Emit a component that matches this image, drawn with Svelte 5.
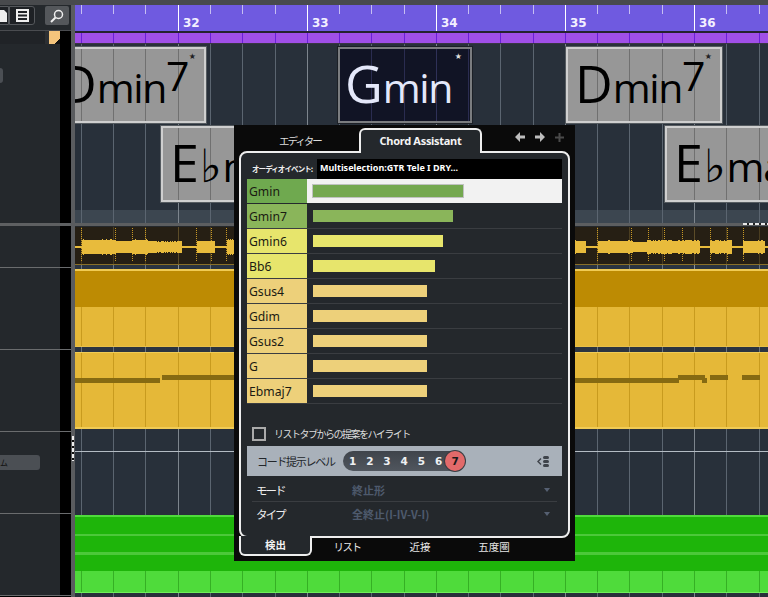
<script>
  const xs = [81,113,145,178,210,242,275,307,339,371,404,436,468,500,533,565,597,629,662,694,726,759];
  const isBar = (i) => (i % 4) === 3;
  const rulerLabels = [[178,32],[307,33],[436,34],[565,35],[694,36]];

  const events = [
    { left: 50, top: 47, w: 156, root: 'D', q: 'min', sup: '7', kind: 'gray' },
    { left: 338, top: 47, w: 134, root: 'G', q: 'min', sup: '', kind: 'dark' },
    { left: 566, top: 47, w: 156, root: 'D', q: 'min', sup: '7', kind: 'gray' },
    { left: 161, top: 126, w: 120, root: 'E', flat: true, q: 'maj', sup: '', kind: 'gray' },
    { left: 665, top: 126, w: 160, root: 'E', flat: true, q: 'maj', sup: '', kind: 'gray' }
  ];

  const chords = [
    { name: 'Gmin', w: 150, c: '#6fa94f', b: '#74a850', on: true },
    { name: 'Gmin7', w: 140, c: '#8ab55a', b: '#8ab55a' },
    { name: 'Gmin6', w: 130, c: '#e7e56c', b: '#e7e56c' },
    { name: 'Bb6', w: 122, c: '#e7e56c', b: '#e7e56c' },
    { name: 'Gsus4', w: 114, c: '#edd07a', b: '#edd07a' },
    { name: 'Gdim', w: 114, c: '#edd07a', b: '#edd07a' },
    { name: 'Gsus2', w: 114, c: '#edd07a', b: '#edd07a' },
    { name: 'G', w: 114, c: '#edd07a', b: '#edd07a' },
    { name: 'Ebmaj7', w: 114, c: '#edd07a', b: '#edd07a' }
  ];

  const segs = [
    [75,82,1],[82,116,7],[116,132,6],[132,148,7],[148,182,5.5],[182,197,1],[197,215,6],[215,227,1],[227,234,7],
    [575,586,6],[586,598,1],[598,633,6],[633,647,5],[647,700,6.5],[700,710,1],[710,732,6.5],[732,743,1],[743,765,6],[765,768,1]
  ];
  let seed = 7;
  const rnd = () => { seed = (seed * 16807) % 2147483647; return seed / 2147483647; };
  let wave = '';
  for (const [a, b, amp] of segs) {
    for (let x = a; x < b; x++) {
      const j = amp > 1 ? amp * (0.95 + rnd() * 0.14) : 1;
      wave += `M${x - 75 + 0.5} ${(20 - j).toFixed(0)}V${(20 + j).toFixed(0)}`;
    }
  }
  const dots = [81,115,132,145,196,211,226,597,631,648,664,682,710,727,743];
  const notes = [
    [75,160,25],[162,234,22],[575,679,25],[678,705,22],[702,707,25],[710,728,22],[742,760,22]
  ];
  const levels = [1,2,3,4,5,6];
</script>

{#snippet lines(offset)}
  {#each xs as x, i}
    <i class="ln" class:bar={isBar(i)} style:left="{x - offset}px"></i>
  {/each}
{/snippet}

<div class="app">
  <div class="topstrip"></div>
  <div class="cols">
    <aside class="left">
      <div class="toolbar">
        <div class="tgroup">
          <span class="tbtn first">
            <svg width="8" height="14" viewBox="0 0 8 14"><path d="M0 1h5l3 3v9H0z" fill="#eee"/></svg>
          </span>
          <span class="tbtn">
            <svg width="13" height="13" viewBox="0 0 13 13"><path d="M0 0h13v13H0z M2 2v2h9V2z M2 5.500v2h9v-2z M2 9v2h9V9z" fill="#eee" fill-rule="evenodd"/></svg>
          </span>
        </div>
        <span class="search">
          <svg width="14" height="14" viewBox="0 0 14 14"><circle cx="8.500" cy="5.500" r="4" fill="none" stroke="#eee" stroke-width="1.500"/><path d="M5.500 8.500L1 13" stroke="#eee" stroke-width="2"/></svg>
        </span>
      </div>
      <div class="lhead"><span class="peach"></span></div>
      <div class="lrow r1"><span class="lbtn tiny"></span></div>
      <div class="lrow r2"></div>
      <div class="lrow r3"></div>
      <div class="lrow r3"></div>
      <div class="lrow r3"><span class="lbtn wide">ム</span></div>
      <div class="lrow r3"></div>
    </aside>
    <div class="divider"><span class="grip"></span></div>

    <main class="main">
      <div class="ruler">
        {@render lines(75)}
        {#each rulerLabels as [x, n]}
          <b class="num" style:left="{x - 75 + 5}px">{n}</b>
        {/each}
      </div>
      <div class="purple">{@render lines(75)}</div>
      <div class="chordtrack">
        {@render lines(75)}
        {#each events as e}
          <div class="ev {e.kind}" style:left="{e.left - 75}px" style:top="{e.top - 44}px" style:width="{e.w}px">
            {@render lines(e.left + 2)}
            <div class="evtext">
              <span class="root">{e.root}</span>{#if e.flat}<span class="flat">♭</span>{/if}<span class="q">{e.q}</span>{#if e.sup}<span class="sup">{e.sup}</span>{/if}
            </div>
            {#if !e.flat}<span class="star">★</span>{/if}
          </div>
        {/each}
      </div>
      <div class="band">{@render lines(75)}</div>
      <div class="sep"><span class="handle"></span></div>
      <div class="audio">
        {@render lines(75)}
        {#each dots as x}
          <i class="dot" style:left="{x - 75}px"></i>
        {/each}
        <svg class="wave" width="693" height="37" viewBox="0 0 693 37"><path d={wave} stroke="#e8bb3c" stroke-width="1" fill="none"/></svg>
      </div>
      <div class="gap g1">{@render lines(75)}</div>
      <div class="ydark">{@render lines(75)}</div>
      <div class="ylight">{@render lines(75)}</div>
      <div class="gap g2">{@render lines(75)}</div>
      <div class="ynotes">
        {@render lines(75)}
        {#each notes as [a, b, y]}
          <i class="note" style:left="{a - 75}px" style:width="{b - a}px" style:top="{y}px"></i>
        {/each}
      </div>
      <div class="empty">{@render lines(75)}<i class="hline"></i></div>
      <div class="green">
        {@render lines(75)}
        <div class="gline one"></div><div class="gline two"></div>
      </div>
      <div class="glight">{@render lines(75)}</div>
      <div class="foot">{@render lines(75)}</div>
    </main>
  </div>

  <section class="panel">
    <header class="ptabs">
      <span class="ptab">エディター</span>
      <span class="ptab active">Chord Assistant</span>
      <span class="picons">
        <svg width="10" height="10" viewBox="0 0 10 10"><path d="M5 0v3.500h5v3H5V10L0 5z" fill="#bdbdbd"/></svg>
        <svg width="10" height="10" viewBox="0 0 10 10"><path d="M5 0v3.500H0v3h5V10l5-5z" fill="#bdbdbd"/></svg>
        <svg width="9" height="9" viewBox="0 0 9 9"><path d="M3.500 0h2v3.500H9v2H5.500V9h-2V5.500H0v-2h3.500z" fill="#4a4a4a"/></svg>
      </span>
    </header>

    <div class="body">
      <div class="info">
        <span class="ilabel">オーディオイベント:</span>
        <span class="ivalue">Multiselection:GTR Tele I DRY...</span>
      </div>
      <ul class="list">
        {#each chords as c}
          <li class="row" class:on={c.on}>
            <span class="cname" style:background={c.c}>{c.name}</span>
            <span class="ctrack"><i class="cbar" style:width="{c.w}px" style:background={c.b}></i></span>
          </li>
        {/each}
      </ul>
      <label class="check"><span class="box"></span>リストタブからの提案をハイライト</label>
      <div class="level">
        <span class="ltext">コード提示レベル</span>
        <div class="pill">
          {#each levels as n}<span class="lv">{n}</span>{/each}
          <span class="lv seven">7</span>
        </div>
        <svg class="licon" width="13" height="11" viewBox="0 0 13 11"><path d="M4 2.500L1 5.500l3 3" fill="none" stroke="#3f444b" stroke-width="1.500"/><rect x="6" y="0" width="6" height="3" rx="1.500" fill="#3f444b"/><rect x="6" y="4" width="6" height="3" rx="1.500" fill="#3f444b"/><rect x="6" y="8" width="6" height="3" rx="1.500" fill="#3f444b"/></svg>
      </div>
      <div class="field bordered">
        <span class="flabel">モード</span><span class="fvalue">終止形</span><i class="caret"></i>
      </div>
      <div class="field">
        <span class="flabel">タイプ</span><span class="fvalue">全終止(I-IV-V-I)</span><i class="caret"></i>
      </div>
    </div>

    <footer class="btabs">
      <span class="btab active">検出</span>
      <span class="btab t2">リスト</span>
      <span class="btab t3">近接</span>
      <span class="btab t4">五度圏</span>
    </footer>
  </section>
</div>

<style>
  :global(body) { margin: 0; background: #24282c; }
  .app {
    position: relative; width: 768px; height: 597px; overflow: hidden;
    background: #24282c; font-family: "Noto Sans", "Noto Sans CJK JP", sans-serif;
  }
  .topstrip { height: 5px; background: #484a4d; }
  .cols { display: flex; height: 592px; }

  /* left column */
  .left { width: 71px; flex: none; display: flex; flex-direction: column; background: #000; overflow: hidden; }
  .toolbar { height: 25px; flex: none; display: flex; align-items: flex-start; background: #24282c; padding-top: 1px; box-sizing: border-box; }
  .tgroup { display: flex; margin-left: -8px; height: 19px; }
  .tbtn { width: 24px; height: 17px; border: 1px solid #55585c; display: flex; align-items: center; justify-content: center; background: #1e2125; }
  .tbtn.first { width: 14px; border-radius: 3px 0 0 3px; justify-content: flex-end; padding-right: 1px; }
  .tbtn + .tbtn { border-left: 1px solid #55585c; border-radius: 0 3px 3px 0; }
  .search { margin-left: 10px; width: 24px; height: 19px; background: #54575b; border-radius: 2px; border: 0; display: flex; align-items: center; justify-content: center; }
  .lhead { height: 14px; flex: none; display: flex; background: linear-gradient(#202327, #202327) 0 0 / 45px 100% no-repeat, linear-gradient(#2c2f33, #2c2f33) 45px 0 / 4px 100% no-repeat, #000; border-top: 1px solid #4a4c50; box-sizing: border-box; }
  .peach { width: 11px; height: 13px; margin-left: 49px; background: linear-gradient(135deg, #f4c47c 78%, #111 79%); }
  .lrow { position: relative; flex: none; box-sizing: border-box; border-bottom: 1px solid #6a6c6e; background: linear-gradient(#24282c, #24282c) 0 0 / 60px 100% no-repeat, #000; }
  .r1 { height: 182px; border-bottom: 3px solid #5e6062; }
  .r2 { height: 42px; }
  .r3 { height: 82px; }
  .lbtn { position: absolute; display: block; background: #4b4f54; border-radius: 3px; }
  .tiny { left: -4px; top: 24px; width: 7px; height: 15px; }
  .wide { left: -4px; top: 23px; width: 44px; height: 15px; font-size: 8px; line-height: 15px; color: #111; padding-left: 4px; box-sizing: border-box; font-family: "Noto Sans CJK JP", sans-serif; }

  .divider { position: relative; width: 4px; flex: none; background: #5a5c5f; }
  .grip { position: absolute; left: 1px; top: 431px; width: 2px; height: 25px; background: repeating-linear-gradient(#eee 0 4px, #111 4px 6px); }

  /* main */
  .main { flex: 1; min-width: 0; display: flex; flex-direction: column; overflow: hidden; --l: #5b6570; --b: #7d858d; }
  .main > div { position: relative; flex: none; overflow: hidden; }
  .ln { position: absolute; top: 0; bottom: 0; width: 1px; background: var(--l); }
  .ln.bar { background: var(--b); }

  .ruler { height: 28px; background: #6f5ae0; border-bottom: 2px solid #26222f; box-sizing: border-box; --l: #c6bef2; --b: #fff; }
  .ruler .ln { bottom: 17px; }
  .ruler .ln.bar { bottom: 0; }
  .num { position: absolute; top: 10px; font: bold 12px/16px "DejaVu Sans", sans-serif; color: #f3f0ff; letter-spacing: -0.2px; }
  .purple { height: 10px; background: #a04fe8; border-bottom: 1px solid #3a3544; --l: #6a20d8; --b: #6a20d8; }

  .chordtrack { height: 166px; background: #28303a; }
  .ev { position: absolute; height: 76px; box-sizing: border-box; border: 2px solid #cfcfcf; background: #979797; overflow: hidden; --l: #707070; --b: #707070; outline: 1px solid #555b60; }
  .ev.dark { background: #111425; border-color: #7b7d80; --l: #2a2c50; --b: #2f3158; outline-color: #1c2026; }
  .evtext { position: absolute; left: 7px; top: 0; display: flex; align-items: baseline; color: #000; font-family: "Open Sans", sans-serif; font-weight: 400; line-height: 68px; white-space: nowrap; }
  .dark .evtext { color: #e4e8fa; left: 5px; }
  .root { font-size: 52px; }
  .q { font-size: 41px; letter-spacing: -1.4px; }
  .flat { font-size: 46px; font-family: "DejaVu Sans", sans-serif; margin: 0 1px 0 1px; }
  .sup { font-size: 41px; position: relative; top: -12px; margin-left: 0; }
  .star { position: absolute; right: 8px; top: 3px; font: 8px/10px "DejaVu Sans", sans-serif; color: #222; }
  .dark .star { color: #ddd; }

  .band { height: 13px; background: #3c4650; }
  .sep { height: 3px; background: #5c5e60; }
  .handle { position: absolute; right: 0; top: 0; width: 25px; height: 2px; background: repeating-linear-gradient(90deg, #e8e8e8 0 4px, #222 4px 6px); }
  .audio { background: #261f14; border-bottom: 1px solid #8a7028; height: 37px; --l: #4a3d20; --b: #5c4c28; margin-top: 1px; }
  .dot { position: absolute; top: 1px; height: 33px; width: 1px; background: repeating-linear-gradient(#c99a26 0 1px, transparent 1px 2px); }
  .wave { position: absolute; left: 0; top: 0; }

  .gap { background: #2b3440; --l: #6a7480; --b: #8a929a; }
  .g1 { height: 4px; }
  .g2 { border-top: 1px solid #e8c048; height: 5px; }
  .ydark { height: 38px; background: #bd8b03; border-top: 2px solid #f0cb55; box-sizing: border-box; --l: #bd8b03; --b: #bd8b03; }
  .ylight { height: 39px; background: #e5b838; --l: #c89b1e; --b: #c89b1e; }
  .ynotes { height: 74px; background: #e5b838; border-top: 1px solid #f0cb55; border-bottom: 2px solid #f0cb55; --l: #c89b1e; --b: #c89b1e; }
  .note { position: absolute; height: 5px; background: #866a12; }
  .empty { height: 86px; background: #28303a; }
  .hline { position: absolute; left: 0; right: 0; top: 22px; height: 1px; background: #b4bcc4; }
  .green { background: #1eb50a; border-top: 2px solid #4fdc3c; height: 54px; --l: #1eb50a; --b: #1eb50a; }
  .gline { position: relative; background: #4cc83a; }
  .gline.one { height: 2px; margin-top: 17px; }
  .gline.two { height: 3px; margin-top: 16px; }
  .glight { height: 21px; background: #4fdb3b; border-bottom: 1px solid #6ef05a; --l: #35b024; --b: #35b024; }
  .foot { height: 5px; background: #28303a; }

  /* panel */
  .panel { position: absolute; left: 234px; top: 125px; width: 341px; height: 436px; background: #0a0a0a; box-sizing: border-box; padding: 3px 5px 0; display: flex; flex-direction: column; color: #eee; }
  .ptabs { position: relative; height: 25px; flex: none; display: flex; }
  .ptab { font: 10.5px/22px "Noto Sans CJK JP", sans-serif; color: #ddd; }
  .ptabs .ptab:first-child { margin-left: 40px; margin-top: 2px; width: 76px; letter-spacing: -2px; }
  .ptab.active { position: relative; z-index: 2; box-sizing: border-box; margin-left: 4px; width: 123px; height: 25px; background: #24282c; border: 2px solid #eee; border-bottom: 0; border-radius: 6px 6px 0 0; text-align: center; font: bold 11px/21px "Noto Sans", sans-serif; color: #f4f4f4; letter-spacing: -0.3px; }
  .picons { position: absolute; left: 276px; top: 4px; display: flex; align-items: center; gap: 10px; }

  .body { position: relative; flex: none; box-sizing: border-box; height: 387px; margin-top: -2px; background: #24282c; border: 2px solid #eee; border-radius: 8px; padding: 6px 6px 0; }
  .info { display: flex; height: 20px; align-items: center; }
  .ilabel { width: 70px; flex: none; padding-left: 5px; box-sizing: border-box; font: bold 7.5px/20px "Noto Sans CJK JP", sans-serif; color: #eee; white-space: nowrap; letter-spacing: -0.9px; }
  .ivalue { flex: 1; background: #000; font: bold 9px/17px "Noto Sans", sans-serif; padding-left: 3px; height: 20px; box-sizing: border-box; padding-bottom: 3px; color: #fff; }
  .list { list-style: none; margin: 0; padding: 0; }
  .row { display: flex; height: 25px; box-sizing: border-box; border-bottom: 1px solid #3a3d41; }
  .row.on { border-bottom-color: #24282c; }
  .cname { width: 60px; flex: none; padding-left: 2px; box-sizing: border-box; font-size: 12.2px; line-height: 25px; color: #1a1a12; }
  .ctrack { flex: 1; display: flex; align-items: center; padding-left: 6px; }
  .row.on .ctrack { background: #f2f2f2; }
  .cbar { display: block; height: 12px; }
  .row.on .cbar { outline: 1px solid #bfc2c0; }
  .check { display: flex; align-items: center; height: 16px; margin: 22px 0 4px 5px; font: 10px/16px "Noto Sans CJK JP", sans-serif; color: #ddd; letter-spacing: -1.5px; }
  .box { width: 10px; height: 10px; border: 2px solid #aaa; margin-right: 8px; }
  .level { display: flex; align-items: center; height: 30px; background: #a9b1ba; padding: 0 12px 0 10px; }
  .ltext { width: 86px; flex: none; font: 11px/30px "Noto Sans CJK JP", sans-serif; color: #22262a; letter-spacing: -1.3px; white-space: nowrap; }
  .pill { display: flex; align-items: center; height: 20px; border-radius: 10px; background: linear-gradient(#3f444b, #50565e); padding-left: 1px; }
  .lv { width: 17.2px; text-align: center; font: bold 10.5px/20px "DejaVu Sans", sans-serif; color: #eef0f2; }
  .lv.seven { width: 20px; height: 20px; border-radius: 50%; background: #e26a6a; color: #1a1a1a; box-shadow: 0 0 0 1px #3a3d42; margin-left: -2px; }
  .licon { margin-left: auto; }
  .field { position: relative; display: flex; align-items: center; height: 24px; margin: 0 5px; box-sizing: border-box; }
  .bordered { border-bottom: 1px solid #3a3d41; margin-top: 2px; }
  .flabel { width: 100px; flex: none; padding-left: 4px; box-sizing: border-box; font: 11.5px/24px "Noto Sans CJK JP", sans-serif; color: #eee; letter-spacing: -2px; }
  .fvalue { font: bold 11px/24px "Noto Sans CJK JP", sans-serif; color: #4e5a6c; }
  .caret { position: absolute; right: 7px; top: 10px; border: 3px solid transparent; border-top: 4px solid #566072; border-bottom: 0; }

  .btabs { position: relative; height: 21px; flex: none; font: 10.5px/18px "Noto Sans CJK JP", sans-serif; color: #e6e6e6; margin-top: -2px; }
  .btab { position: absolute; top: 2px; text-align: center; width: 72px; }
  .btab.active { left: 0; top: 0; width: 73px; height: 20px; box-sizing: border-box; background: #24282c; border: 2px solid #eee; border-top: 0; border-radius: 0 0 6px 6px; line-height: 18px; font-weight: 700; color: #f2f2f2; z-index: 2; }
  .t2 { left: 72px; letter-spacing: -1.5px; } .t3 { left: 145px; } .t4 { left: 219px; }
</style>
